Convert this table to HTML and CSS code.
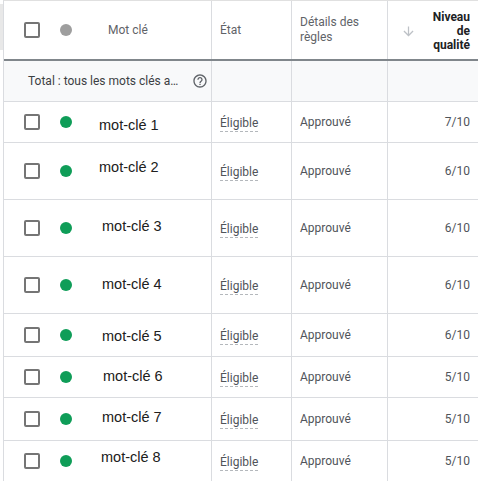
FILE: index.html
```
<!DOCTYPE html>
<html lang="fr">
<head>
<meta charset="utf-8">
<title>Mots clés</title>
<link rel="stylesheet" href="styles.css">
</head>
<body>
<div class="page">
  <div class="edge"><div class="edge-shade"></div></div>
  <div class="table">
    <div class="row head">
      <div class="cell c-kw"><span class="cb"></span><span class="dot dot-grey"></span><span class="h-label h-kw">Mot clé</span></div>
      <div class="cell c-state"><span class="h-label">État</span></div>
      <div class="cell c-rules"><span class="h-label">Détails des<br>règles</span></div>
      <div class="cell c-qs">
        <svg class="sort" viewBox="0 0 24 24"><path d="M20 12l-1.41-1.41L13 16.17V4h-2v12.17l-5.58-5.59L4 12l8 8 8-8z"/></svg>
        <span class="h-strong">Niveau<br>de<br>qualité</span>
      </div>
    </div>
    <div class="row total">
      <div class="cell c-kw total-kw"><span class="total-label">Total : tous les mots clés a…</span>
        <svg class="help" viewBox="0 0 24 24"><path d="M11 18h2v-2h-2v2zm1-16C6.48 2 2 6.480 2 12s4.48 10 10 10 10-4.48 10-10S17.52 2 12 2zm0 18c-4.41 0-8-3.59-8-8s3.590-8 8-8 8 3.59 8 8-3.59 8-8 8zm0-14c-2.21 0-4 1.79-4 4h2c0-1.1.9-2 2-2s2 .9 2 2c0 2-3 1.75-3 5h2c0-2.250 3-2.5 3-5 0-2.21-1.79-4-4-4z"/></svg>
      </div>
      <div class="cell"></div>
      <div class="cell"></div>
      <div class="cell"></div>
    </div>
    <div class="row r1">
      <div class="cell c-kw"><span class="cb"></span><span class="dot"></span><span class="kw">mot-clé 1</span></div>
      <div class="cell c-state"><span class="elig">Éligible</span></div>
      <div class="cell c-rules"><span class="txt">Approuvé</span></div>
      <div class="cell c-num"><span class="txt">7/10</span></div>
    </div>
    <div class="row r2">
      <div class="cell c-kw"><span class="cb"></span><span class="dot"></span><span class="kw">mot-clé 2</span></div>
      <div class="cell c-state"><span class="elig">Éligible</span></div>
      <div class="cell c-rules"><span class="txt">Approuvé</span></div>
      <div class="cell c-num"><span class="txt">6/10</span></div>
    </div>
    <div class="row r3">
      <div class="cell c-kw"><span class="cb"></span><span class="dot"></span><span class="kw">mot-clé 3</span></div>
      <div class="cell c-state"><span class="elig">Éligible</span></div>
      <div class="cell c-rules"><span class="txt">Approuvé</span></div>
      <div class="cell c-num"><span class="txt">6/10</span></div>
    </div>
    <div class="row r4">
      <div class="cell c-kw"><span class="cb"></span><span class="dot"></span><span class="kw">mot-clé 4</span></div>
      <div class="cell c-state"><span class="elig">Éligible</span></div>
      <div class="cell c-rules"><span class="txt">Approuvé</span></div>
      <div class="cell c-num"><span class="txt">6/10</span></div>
    </div>
    <div class="row r5">
      <div class="cell c-kw"><span class="cb"></span><span class="dot"></span><span class="kw">mot-clé 5</span></div>
      <div class="cell c-state"><span class="elig">Éligible</span></div>
      <div class="cell c-rules"><span class="txt">Approuvé</span></div>
      <div class="cell c-num"><span class="txt">6/10</span></div>
    </div>
    <div class="row r6">
      <div class="cell c-kw"><span class="cb"></span><span class="dot"></span><span class="kw">mot-clé 6</span></div>
      <div class="cell c-state"><span class="elig">Éligible</span></div>
      <div class="cell c-rules"><span class="txt">Approuvé</span></div>
      <div class="cell c-num"><span class="txt">5/10</span></div>
    </div>
    <div class="row r7">
      <div class="cell c-kw"><span class="cb"></span><span class="dot"></span><span class="kw">mot-clé 7</span></div>
      <div class="cell c-state"><span class="elig">Éligible</span></div>
      <div class="cell c-rules"><span class="txt">Approuvé</span></div>
      <div class="cell c-num"><span class="txt">5/10</span></div>
    </div>
    <div class="row r8">
      <div class="cell c-kw"><span class="cb"></span><span class="dot"></span><span class="kw">mot-clé 8</span></div>
      <div class="cell c-state"><span class="elig">Éligible</span></div>
      <div class="cell c-rules"><span class="txt">Approuvé</span></div>
      <div class="cell c-num"><span class="txt">5/10</span></div>
    </div>
  </div>
</div>
</body>
</html>
```
FILE: styles.css
```
* { box-sizing: border-box; }
html, body { margin: 0; padding: 0; background: #fff; }
body {
  width: 478px;
  height: 481px;
  overflow: hidden;
  font-family: Roboto, "Liberation Sans", sans-serif;
  font-size: 12px;
  color: #3c4043;
}
.page { display: flex; align-items: flex-start; }
.edge { width: 3px; flex: none; padding-top: 4px; }
.edge-shade { height: 46px; background: #e8e8e8; }
.table {
  flex: 1;
  border-left: 1px solid #dadce0;
  border-top: 1px solid #e0e0e0;
}
.row {
  display: grid;
  grid-template-columns: 208px 80px 96px 1fr;
  border-bottom: 1px solid #dadce0;
}
.cell {
  display: flex;
  align-items: center;
  border-right: 1px solid #dadce0;
  min-width: 0;
}
.cell:last-child { border-right: 0; }

.head { height: 60px; border-bottom: 2px solid #80868b; }
.total { height: 41px; background: #f8f9fa; }
.r1 { height: 41px; }
.r2 { height: 57px; }
.r3 { height: 57px; }
.r4 { height: 57px; }
.r5 { height: 43px; }
.r6 { height: 41px; }
.r7 { height: 43px; }
.r8 { height: 41px; }

.c-kw { padding-left: 20px; }
.c-state { padding-left: 8px; }
.c-rules { padding-left: 8px; }
.c-num { justify-content: flex-end; padding-right: 8px; }

.cb {
  width: 16px;
  height: 16px;
  border: 2px solid #757575;
  border-radius: 2px;
  flex: none;
}
.dot {
  width: 12px;
  height: 12px;
  border-radius: 50%;
  background: #0f9d58;
  margin-left: 20px;
  flex: none;
}
.dot-grey { background: #9e9e9e; }

.h-label { color: #5f6368; line-height: 15px; }
.h-kw { margin-left: 36px; }
.c-qs { padding-left: 13px; padding-right: 8px; }
.sort { width: 15px; height: 15px; fill: #bdc1c6; flex: none; margin-top: 2px; }
.h-strong {
  margin-left: auto;
  text-align: right;
  font-weight: 700;
  color: #202124;
  line-height: 14px;
  margin-top: 1px;
}

.total-kw { padding-left: 24px; padding-right: 3px; }
.total-label { color: #3c4043; white-space: nowrap; }
.help { width: 16px; height: 16px; fill: #5f6368; margin-left: auto; flex: none; }

.kw {
  align-self: flex-start;
  font-family: "Liberation Sans", Arial, sans-serif;
  font-size: 14.5px;
  line-height: 17px;
  color: #202020;
  white-space: nowrap;
}
.r1 .kw { padding-top: 15px; margin-left: 27px; }
.r2 .kw { padding-top: 16px; margin-left: 27px; }
.r3 .kw { padding-top: 18px; margin-left: 30px; }
.r4 .kw { padding-top: 19px; margin-left: 30px; }
.r5 .kw { padding-top: 14px; margin-left: 30px; }
.r6 .kw { padding-top: 11px; margin-left: 31px; }
.r7 .kw { padding-top: 11px; margin-left: 30px; }
.r8 .kw { padding-top: 8px; margin-left: 29px; }

.elig {
  line-height: 14px;
  padding-bottom: 1px;
  border-bottom: 1px dashed #b4b8bc;
  color: #50545a;
  margin-top: 3px;
}
.txt { line-height: 14px; color: #50545a; }
```
